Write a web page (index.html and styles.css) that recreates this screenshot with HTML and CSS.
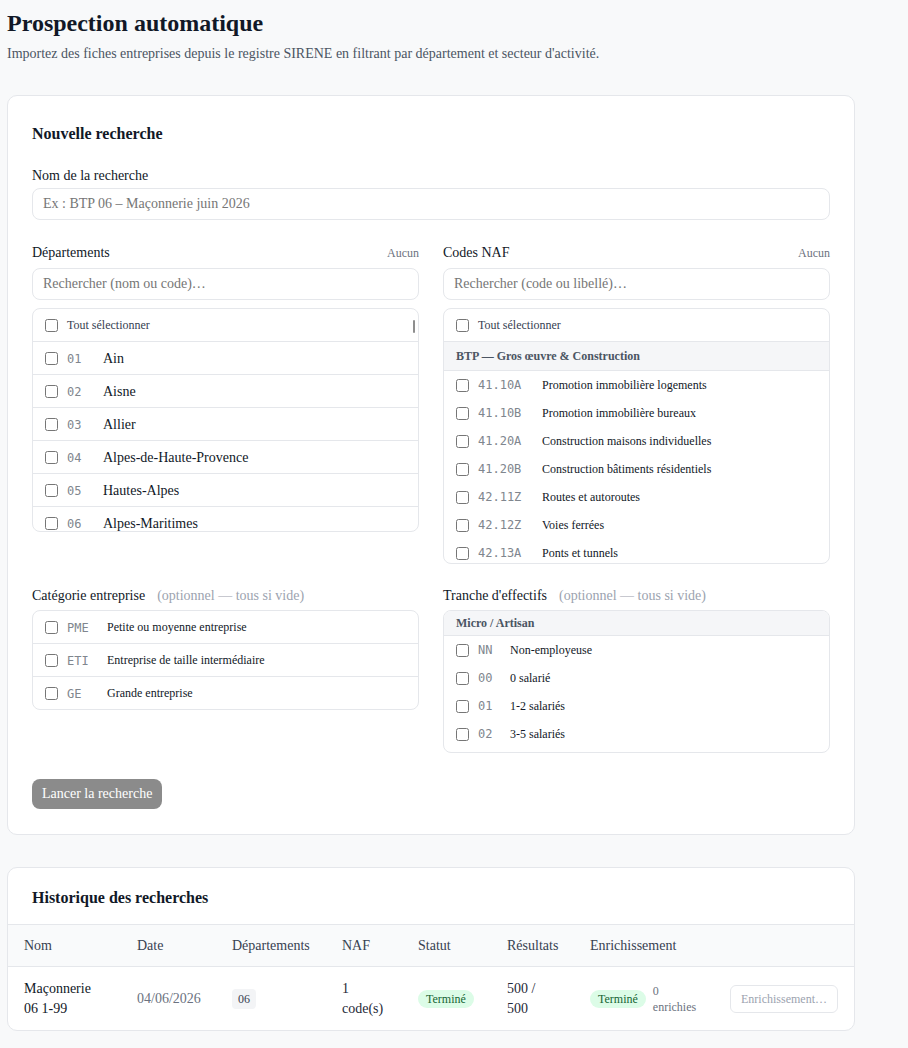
FILE: index.html
```html
<!DOCTYPE html>
<html lang="fr">
<head>
<meta charset="utf-8">
<title>Prospection automatique</title>
<link rel="stylesheet" href="styles.css">
</head>
<body>
<main class="page">
  <header>
    <h1 class="page-title">Prospection automatique</h1>
    <p class="page-lead">Importez des fiches entreprises depuis le registre SIRENE en filtrant par département et secteur d'activité.</p>
  </header>

  <section class="card form-card">
    <h2 class="card-title">Nouvelle recherche</h2>

    <div class="field">
      <label class="label" for="search-name">Nom de la recherche</label>
      <input id="search-name" class="text-input" type="text" placeholder="Ex : BTP 06 – Maçonnerie juin 2026">
    </div>

    <div class="grid-2 pickers">
      <div class="picker">
        <div class="label-row">
          <span class="label">Départements</span>
          <button class="link-none" type="button">Aucun</button>
        </div>
        <input class="text-input search" type="text" placeholder="Rechercher (nom ou code)…">
        <div class="list list-depts">
          <span class="scroll-thumb"></span>
          <label class="row row-all"><input type="checkbox"><span>Tout sélectionner</span></label>
          <label class="row row-line"><input type="checkbox"><span class="code code-dept">01</span><span class="name">Ain</span></label>
          <label class="row row-line"><input type="checkbox"><span class="code code-dept">02</span><span class="name">Aisne</span></label>
          <label class="row row-line"><input type="checkbox"><span class="code code-dept">03</span><span class="name">Allier</span></label>
          <label class="row row-line"><input type="checkbox"><span class="code code-dept">04</span><span class="name">Alpes-de-Haute-Provence</span></label>
          <label class="row row-line"><input type="checkbox"><span class="code code-dept">05</span><span class="name">Hautes-Alpes</span></label>
          <label class="row row-line"><input type="checkbox"><span class="code code-dept">06</span><span class="name">Alpes-Maritimes</span></label>
        </div>
      </div>

      <div class="picker">
        <div class="label-row">
          <span class="label">Codes NAF</span>
          <button class="link-none" type="button">Aucun</button>
        </div>
        <input class="text-input search" type="text" placeholder="Rechercher (code ou libellé)…">
        <div class="list list-naf">
          <label class="row row-all"><input type="checkbox"><span>Tout sélectionner</span></label>
          <div class="group group-naf">BTP — Gros œuvre &amp; Construction</div>
          <label class="row row-compact"><input type="checkbox"><span class="code code-naf">41.10A</span><span>Promotion immobilière logements</span></label>
          <label class="row row-compact"><input type="checkbox"><span class="code code-naf">41.10B</span><span>Promotion immobilière bureaux</span></label>
          <label class="row row-compact"><input type="checkbox"><span class="code code-naf">41.20A</span><span>Construction maisons individuelles</span></label>
          <label class="row row-compact"><input type="checkbox"><span class="code code-naf">41.20B</span><span>Construction bâtiments résidentiels</span></label>
          <label class="row row-compact"><input type="checkbox"><span class="code code-naf">42.11Z</span><span>Routes et autoroutes</span></label>
          <label class="row row-compact"><input type="checkbox"><span class="code code-naf">42.12Z</span><span>Voies ferrées</span></label>
          <label class="row row-compact"><input type="checkbox"><span class="code code-naf">42.13A</span><span>Ponts et tunnels</span></label>
        </div>
      </div>
    </div>

    <div class="grid-2 options">
      <div class="picker">
        <div class="label-row label-row-tight">
          <span class="label">Catégorie entreprise<span class="hint">(optionnel — tous si vide)</span></span>
        </div>
        <div class="list">
          <label class="row row-line small"><input type="checkbox"><span class="code code-cat">PME</span><span>Petite ou moyenne entreprise</span></label>
          <label class="row row-line small"><input type="checkbox"><span class="code code-cat">ETI</span><span>Entreprise de taille intermédiaire</span></label>
          <label class="row row-line small"><input type="checkbox"><span class="code code-cat">GE</span><span>Grande entreprise</span></label>
        </div>
      </div>

      <div class="picker">
        <div class="label-row label-row-tight">
          <span class="label">Tranche d'effectifs<span class="hint">(optionnel — tous si vide)</span></span>
        </div>
        <div class="list list-sizes">
          <div class="group group-sizes">Micro / Artisan</div>
          <label class="row row-compact"><input type="checkbox"><span class="code code-size">NN</span><span>Non-employeuse</span></label>
          <label class="row row-compact"><input type="checkbox"><span class="code code-size">00</span><span>0 salarié</span></label>
          <label class="row row-compact"><input type="checkbox"><span class="code code-size">01</span><span>1-2 salariés</span></label>
          <label class="row row-compact"><input type="checkbox"><span class="code code-size">02</span><span>3-5 salariés</span></label>
        </div>
      </div>
    </div>

    <button class="btn-primary" type="button" disabled>Lancer la recherche</button>
  </section>

  <section class="card history">
    <div class="history-head">
      <h2 class="card-title">Historique des recherches</h2>
    </div>
    <table class="history-table">
      <colgroup>
        <col class="c-name"><col class="c-date"><col class="c-depts"><col class="c-naf">
        <col class="c-status"><col class="c-results"><col class="c-enrich"><col class="c-action">
      </colgroup>
      <thead>
        <tr>
          <th>Nom</th><th>Date</th><th>Départements</th><th>NAF</th>
          <th>Statut</th><th>Résultats</th><th>Enrichissement</th><th></th>
        </tr>
      </thead>
      <tbody>
        <tr>
          <td class="t-name">Maçonnerie 06 1-99</td>
          <td class="t-date">04/06/2026</td>
          <td><span class="chip">06</span></td>
          <td>1 code(s)</td>
          <td><span class="pill">Terminé</span></td>
          <td>500 / 500</td>
          <td>
            <div class="enrich">
              <span class="pill">Terminé</span>
              <span class="enrich-count">0 enrichies</span>
            </div>
          </td>
          <td><button class="btn-ghost" type="button" disabled>Enrichissement…</button></td>
        </tr>
      </tbody>
    </table>
  </section>
</main>
</body>
</html>
```

FILE: styles.css
```css
* {
  box-sizing: border-box;
}

html,
body {
  margin: 0;
}

body {
  background: #f8f9fa;
  font-family: "Liberation Serif", "Times New Roman", serif;
  color: #111827;
}

.page {
  width: 862px;
  padding: 9px 0 24px 7px;
}

/* Page heading */
.page-title {
  margin: 0;
  font-size: 24px;
  line-height: 28px;
  font-weight: 700;
  color: #111827;
}

.page-lead {
  margin: 8px 0 0;
  font-size: 14px;
  line-height: 18px;
  color: #4b5563;
}

/* Cards */
.card {
  width: 848px;
  background: #fff;
  border: 1px solid #e5e7eb;
  border-radius: 10px;
}

.form-card {
  margin-top: 32px;
  padding: 27px 24px 25px;
}

.card-title {
  margin: 0;
  font-size: 16px;
  line-height: 22px;
  font-weight: 700;
  color: #111827;
}

/* Form fields */
.field {
  margin-top: 21px;
}

.label {
  display: block;
  font-size: 14px;
  line-height: 20px;
  color: #111827;
  margin-bottom: 2px;
}

.text-input {
  display: block;
  width: 100%;
  height: 32px;
  padding: 0 10px;
  border: 1px solid #e5e7eb;
  border-radius: 8px;
  background: #fff;
  font-family: inherit;
  font-size: 14px;
  color: #111827;
  outline: none;
}

.text-input::placeholder {
  color: #767676;
}

.grid-2 {
  display: grid;
  grid-template-columns: 1fr 1fr;
  column-gap: 24px;
  align-items: start;
}

.pickers {
  margin-top: 22px;
}

.options {
  margin-top: 21px;
}

.label-row {
  display: flex;
  justify-content: space-between;
  align-items: center;
  height: 20px;
  padding-top: 2px;
  margin-bottom: 6px;
}

.label-row .label {
  margin: 0;
}

.label-row-tight {
  margin-bottom: 5px;
}

.hint {
  margin-left: 12px;
  color: #9ca3af;
}

.link-none {
  padding: 0;
  border: 0;
  background: none;
  font-family: inherit;
  font-size: 12px;
  color: #6b7280;
  cursor: pointer;
}

.search {
  margin-bottom: 8px;
}

/* Checkbox lists */
.list {
  position: relative;
  border: 1px solid #e5e7eb;
  border-radius: 8px;
  overflow: hidden;
  background: #fff;
}

.list-depts {
  height: 224px;
}

.list-naf {
  height: 256px;
}

.list-sizes {
  padding-bottom: 4px;
}

.scroll-thumb {
  position: absolute;
  top: 11px;
  right: 3px;
  width: 2px;
  height: 13px;
  background: #8e8e8e;
  border-radius: 1px;
}

.row {
  display: flex;
  align-items: center;
  gap: 9px;
  padding: 0 12px;
  cursor: pointer;
}

.row input[type="checkbox"] {
  flex: none;
  width: 13px;
  height: 13px;
  margin: 0;
}

.row-all {
  height: 33px;
  border-bottom: 1px solid #e5e7eb;
  font-size: 12px;
  color: #374151;
}

.row-line {
  height: 33px;
  padding-top: 1px;
  border-bottom: 1px solid #e5e7eb;
  font-size: 14px;
}

.row-line:last-child {
  height: 32px;
  border-bottom: 0;
}

.row-line.small,
.row-compact {
  font-size: 12px;
}

.row-compact {
  height: 28px;
}

.name {
  color: #111827;
}

.code {
  flex: none;
  font-family: "DejaVu Sans Mono", "Liberation Mono", monospace;
  font-size: 12px;
  color: #80868e;
}

.code-dept {
  width: 27px;
}

.code-naf {
  width: 55px;
}

.code-cat {
  width: 31px;
}

.code-size {
  width: 23px;
}

.group {
  display: flex;
  align-items: center;
  padding: 0 12px;
  background: #f5f6f8;
  border-bottom: 1px solid #e5e7eb;
  font-size: 12px;
  font-weight: 700;
  color: #4b5563;
}

.group-naf {
  height: 29px;
}

.group-sizes {
  height: 25px;
}

.btn-primary {
  display: block;
  height: 30px;
  margin-top: 26px;
  padding: 0 10px;
  border: 0;
  border-radius: 8px;
  background: #8b8b8b;
  font-family: inherit;
  font-size: 14px;
  color: #fff;
}

/* History */
.history {
  margin-top: 32px;
  overflow: hidden;
}

.history-head {
  display: flex;
  align-items: center;
  height: 57px;
  padding: 4px 24px 0;
  border-bottom: 1px solid #e5e7eb;
}

.history-table {
  width: 100%;
  border-collapse: collapse;
  table-layout: fixed;
}

.c-name { width: 113px; }
.c-date { width: 95px; }
.c-depts { width: 110px; }
.c-naf { width: 76px; }
.c-status { width: 89px; }
.c-results { width: 83px; }
.c-enrich { width: 140px; }
.c-action { width: 140px; }

.history-table th {
  height: 41px;
  padding: 2px 16px 0;
  background: #f9fafb;
  border-bottom: 1px solid #e5e7eb;
  text-align: left;
  font-size: 14px;
  font-weight: 400;
  line-height: 20px;
  color: #374151;
  white-space: nowrap;
}

.history-table td {
  height: 64px;
  padding: 2px 16px 0;
  font-size: 14px;
  line-height: 20px;
  color: #1f2937;
  vertical-align: middle;
}

.history-table .t-name {
  color: #111827;
}

.history-table .t-date {
  color: #6b7280;
}

.chip {
  display: inline-block;
  padding: 2px 6px;
  border-radius: 4px;
  background: #f3f4f6;
  font-size: 12px;
  line-height: 16px;
  color: #374151;
}

.pill {
  display: inline-block;
  flex: none;
  padding: 1px 8px;
  border-radius: 999px;
  background: #dcfce7;
  font-size: 12px;
  line-height: 16px;
  color: #166534;
  white-space: nowrap;
}

.enrich {
  display: flex;
  align-items: center;
  gap: 7px;
}

.enrich-count {
  font-size: 12px;
  line-height: 16px;
  color: #6b7280;
}

.btn-ghost {
  height: 28px;
  padding: 0 10px;
  border: 1px solid #e5e7eb;
  border-radius: 6px;
  background: #fff;
  font-family: inherit;
  font-size: 12px;
  color: #9ca3af;
  white-space: nowrap;
}
```
